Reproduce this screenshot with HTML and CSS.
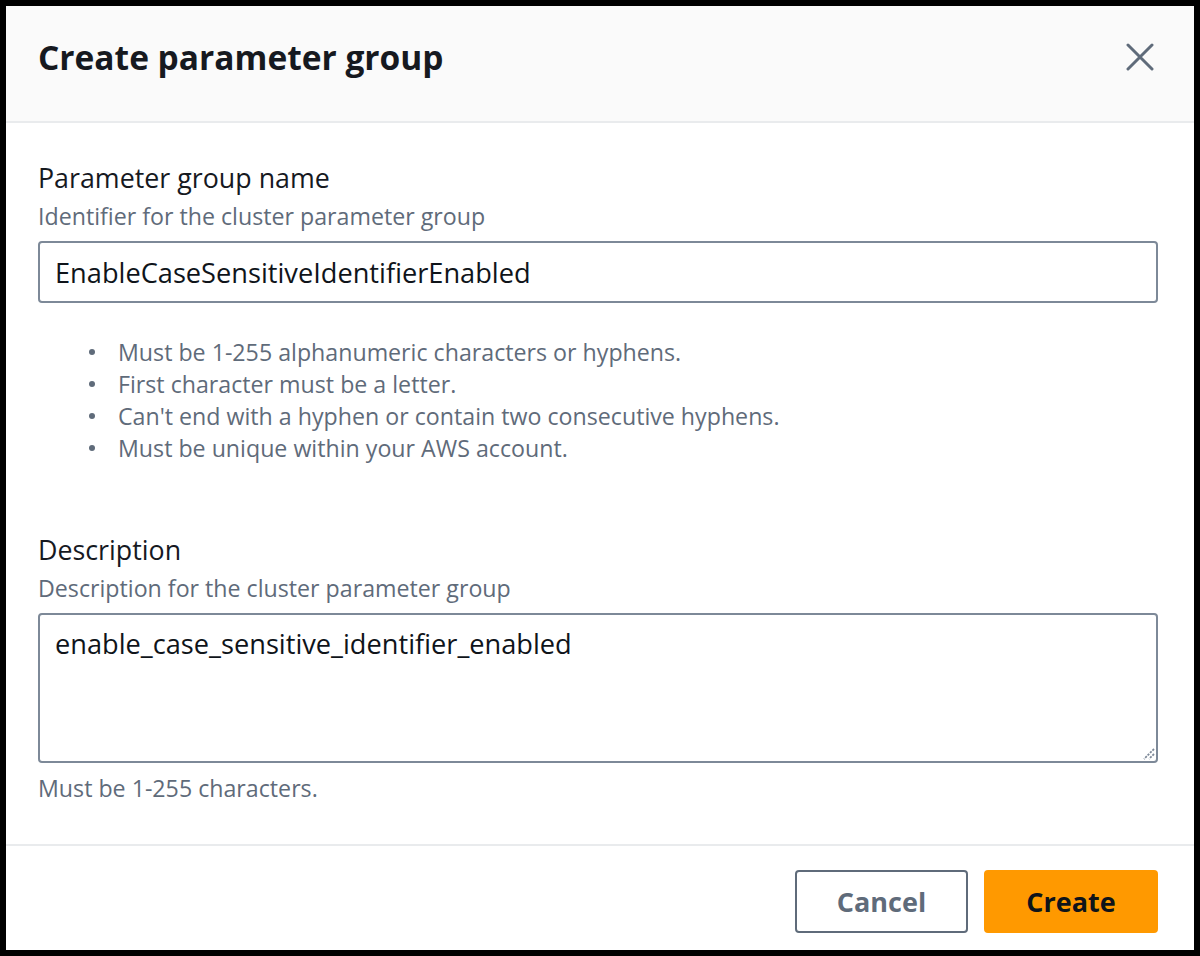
FILE: index.html
```html
<!DOCTYPE html>
<html lang="en">
<head>
<meta charset="utf-8">
<title>Create parameter group</title>
<link rel="stylesheet" href="styles.css">
</head>
<body>
<div class="frame">
  <div class="modal">
    <header class="modal-header">
      <h1 class="modal-title">Create parameter group</h1>
      <button class="close-btn" aria-label="Close">
        <svg width="28" height="28" viewBox="0 0 28 28"><path d="M2 2 L26 26 M26 2 L2 26" stroke="#5f6b7a" stroke-width="3" stroke-linecap="round" fill="none"/></svg>
      </button>
    </header>
    <main class="modal-body">
      <div class="field">
        <label class="field-label">Parameter group name</label>
        <div class="field-desc">Identifier for the cluster parameter group</div>
        <div class="input">EnableCaseSensitiveIdentifierEnabled</div>
        <ul class="constraints">
          <li>Must be 1-255 alphanumeric characters or hyphens.</li>
          <li>First character must be a letter.</li>
          <li>Can't end with a hyphen or contain two consecutive hyphens.</li>
          <li>Must be unique within your AWS account.</li>
        </ul>
      </div>
      <div class="field field-desc-block">
        <label class="field-label">Description</label>
        <div class="field-desc">Description for the cluster parameter group</div>
        <div class="textarea">enable_case_sensitive_identifier_enabled
          <svg class="resize" width="14" height="14" viewBox="0 0 14 14"><path d="M13 3 L3 13 M13 8 L8 13" stroke="#7d8998" stroke-width="1.8" stroke-dasharray="2.2 1.2" fill="none"/></svg>
        </div>
        <div class="hint">Must be 1-255 characters.</div>
      </div>
    </main>
    <footer class="modal-footer">
      <button class="btn btn-normal">Cancel</button>
      <button class="btn btn-primary">Create</button>
    </footer>
  </div>
</div>
</body>
</html>
```

FILE: styles.css
```css
* { box-sizing: border-box; }
html, body { margin: 0; padding: 0; }
body {
  background: #000;
  font-family: "Open Sans", "Noto Sans", sans-serif;
  color: #16191f;
}
.frame {
  width: 1200px;
  height: 956px;
  padding: 6px;
}
.modal {
  width: 100%;
  height: 100%;
  background: #fff;
  display: flex;
  flex-direction: column;
}
.modal-header {
  height: 117px;
  background: #fafafa;
  border-bottom: 2px solid #e9ebed;
  display: flex;
  align-items: center;
  justify-content: space-between;
  padding: 0 40px 14px 32px;
}
.modal-title {
  margin: 0;
  font-size: 33.5px;
  font-weight: 700;
  color: #16191f;
}
.close-btn {
  border: none;
  background: none;
  padding: 0;
  width: 28px;
  height: 28px;
  display: flex;
}
.modal-body {
  flex: 1;
  padding: 38px 36px 0 32px;
}
.field { display: flex; flex-direction: column; }
.field-label {
  font-size: 26.8px;
  line-height: 34px;
  color: #16191f;
}
.field-desc {
  margin-top: 6px;
  font-size: 23.2px;
  line-height: 30px;
  color: #5f6b7a;
}
.input {
  margin-top: 10px;
  height: 62px;
  border: 2px solid #7d8998;
  border-radius: 4px;
  padding: 0 15px;
  display: flex;
  align-items: center;
  font-size: 27.2px;
  color: #0f141a;
}
.constraints {
  list-style: none;
  margin: 33px 0 0 0;
  padding-left: 51px;
  font-size: 23.2px;
  line-height: 32px;
  color: #5f6b7a;
}
.constraints li {
  display: flex;
  align-items: center;
}
.constraints li::before {
  content: "";
  width: 6px;
  height: 6px;
  border-radius: 50%;
  background: #5f6b7a;
  margin-right: 23px;
  flex: none;
}
.field-desc-block { margin-top: 69px; }
.textarea {
  position: relative;
  margin-top: 10px;
  height: 150px;
  border: 2px solid #7d8998;
  border-radius: 4px;
  padding: 12px 15px;
  font-size: 27.2px;
  line-height: 34px;
  color: #0f141a;
}
.resize {
  position: absolute;
  right: 1px;
  bottom: 1px;
}
.hint {
  margin-top: 10px;
  font-size: 23.2px;
  line-height: 30px;
  color: #5f6b7a;
}
.modal-footer {
  border-top: 2px solid #e9ebed;
  height: 106px;
  display: flex;
  justify-content: flex-end;
  align-items: flex-start;
  gap: 16px;
  padding: 24px 36px 0 0;
}
.btn {
  height: 63px;
  border-radius: 4px;
  font-family: "Open Sans", "Noto Sans", sans-serif;
  font-size: 27px;
  font-weight: 700;
  padding: 0;
}
.btn-normal {
  width: 173px;
  background: #fff;
  border: 2px solid #5f6b7a;
  color: #5f6b7a;
}
.btn-primary {
  width: 174px;
  background: #ff9900;
  border: 2px solid #ff9900;
  color: #0f141a;
}
```
